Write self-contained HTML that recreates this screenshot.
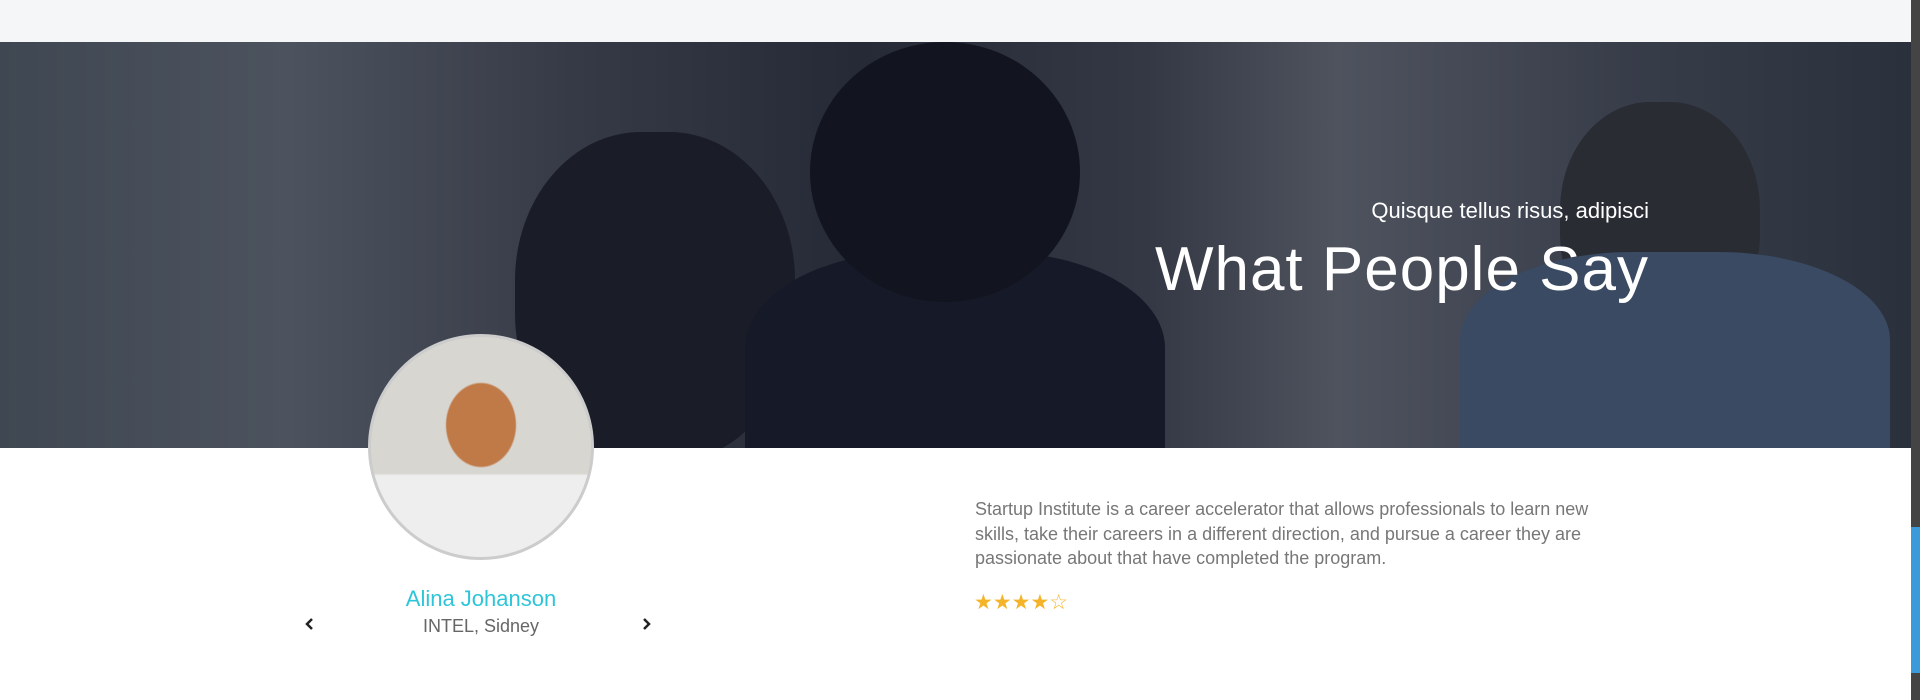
<!DOCTYPE html>
<html><head><style>
*{margin:0;padding:0;box-sizing:border-box}
body{width:1920px;height:700px;overflow:hidden;background:#fff;font-family:"Liberation Sans",sans-serif;position:relative}
.top{position:absolute;left:0;top:0;width:1911px;height:42px;background:#f5f6f8}
.hero{position:absolute;left:0;top:42px;width:1911px;height:406px;overflow:hidden;
background:linear-gradient(90deg,#3f4752 0%,#4c535e 15%,#363a46 30%,#262a36 45%,#343844 60%,#4e535e 70%,#383d4a 85%,#2a303c 100%)}
.sb{position:absolute;left:1911px;top:0;width:9px;height:700px;background:#444}
.thumb{position:absolute;left:1911px;top:527px;width:9px;height:146px;background:#3b9ad9}
.t1{position:absolute;right:262px;top:156px;color:#fff;font-size:22px}
.t2{position:absolute;right:262px;top:192px;color:#fff;font-size:62px;font-weight:normal;letter-spacing:1px}
.av{position:absolute;left:368px;top:334px;width:226px;height:226px;border-radius:50%;border:3px solid #ccc;
background:radial-gradient(ellipse at 50% 40%,#c07a48 0 22%,transparent 23%),linear-gradient(180deg,#d8d6d0 0 62%,#eee 63% 100%);overflow:hidden}
.name{position:absolute;left:281px;width:400px;text-align:center;top:586px;color:#2ec5d9;font-size:22px}
.co{position:absolute;left:281px;width:400px;text-align:center;top:616px;color:#666;font-size:18px}
.ar{position:absolute;top:617px}
.p{position:absolute;left:975px;top:497px;width:625px;color:#777;font-size:18px;line-height:24.5px}
.st{position:absolute;left:974px;top:590px;color:#f5b32a;font-size:21px;letter-spacing:0px}
</style></head><body>
<div class="top"></div>
<div class="hero">
<div style="position:absolute;left:515px;top:90px;width:280px;height:330px;border-radius:45%;background:#1a1c28"></div>
<div style="position:absolute;left:745px;top:210px;width:420px;height:240px;border-radius:40% 40% 0 0;background:#161a28"></div>
<div style="position:absolute;left:810px;top:0px;width:270px;height:260px;border-radius:50%;background:#121420"></div>
<div style="position:absolute;left:1560px;top:60px;width:200px;height:240px;border-radius:45%;background:#2a2c34"></div>
<div style="position:absolute;left:1460px;top:210px;width:430px;height:220px;border-radius:40% 40% 0 0;background:#3a4a62"></div>
<div class="t1">Quisque tellus risus, adipisci</div>
<div class="t2">What People Say</div>
</div>
<div class="av"></div>
<div class="name">Alina Johanson</div>
<div class="co">INTEL, Sidney</div>
<svg class="ar" style="left:303px" width="12" height="14" viewBox="0 0 12 14"><path d="M9 2 L4 7 L9 12" fill="none" stroke="#222" stroke-width="2.5"/></svg>
<svg class="ar" style="left:641px" width="12" height="14" viewBox="0 0 12 14"><path d="M3 2 L8 7 L3 12" fill="none" stroke="#222" stroke-width="2.5"/></svg>
<div class="p">Startup Institute is a career accelerator that allows professionals to learn new skills, take their careers in a different direction, and pursue a career they are passionate about that have completed the program.</div>
<div class="st">★★★★☆</div>
<div class="sb"></div><div class="thumb"></div>
</body></html>
